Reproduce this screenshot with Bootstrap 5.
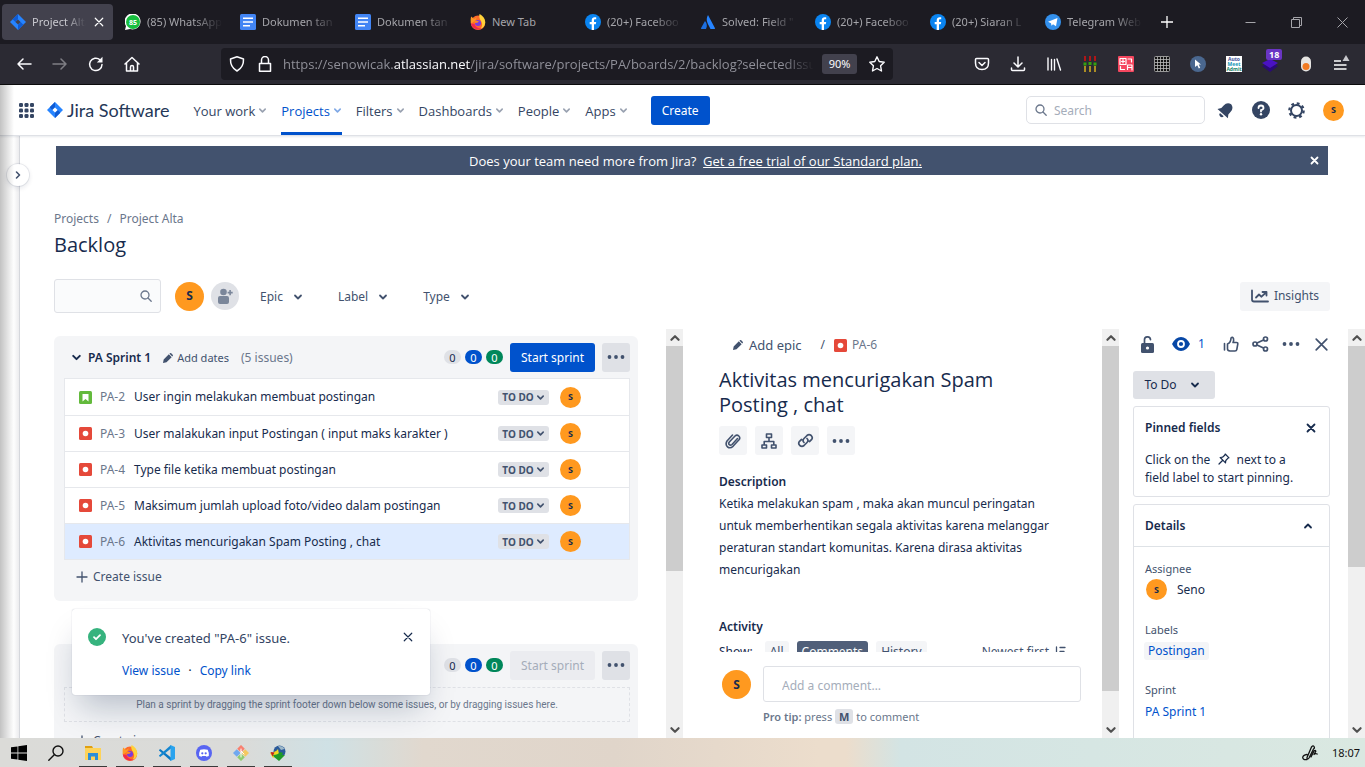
<!DOCTYPE html>
<html lang="en">
<head>
<meta charset="utf-8">
<meta name="viewport" content="width=device-width, initial-scale=1">
<title>Project Alta - Backlog - Jira</title>
<link href="https://cdn.jsdelivr.net/npm/bootstrap@5.3.0/dist/css/bootstrap.min.css" rel="stylesheet">
<style>
:root{--ink:#172b4d;--slate:#42526e;--mute:#6b778c;--line:#dfe1e6;--blue:#0052cc;--soft:#f4f5f7}
body{font-family:"Noto Sans","Open Sans",sans-serif;font-size:12px;line-height:16px;color:var(--ink);white-space:nowrap}
svg{display:block;flex:none}
a{text-decoration:none;color:inherit}
button,.btn{font-size:12px;line-height:16px}
button.plain{background:none;border:0;padding:0;color:inherit;display:flex;align-items:center;justify-content:center}
.stroke{fill:none;stroke:currentColor;stroke-linecap:round;stroke-linejoin:round}

/* browser window */
.tabstrip{height:44px;background:#1c1b22;color:#a5a5aa;padding-left:2px}
.tab{flex:0 1 115px;min-width:0;height:36px;padding:0 8px;font-size:11px;gap:6px;border-radius:4px}
.tab.current{background:#42414d;color:#c9c9cf;flex-basis:111px;margin-right:4px}
.fade-end{overflow:hidden;flex:1;-webkit-mask-image:linear-gradient(90deg,#000 60%,transparent 98%);mask-image:linear-gradient(90deg,#000 60%,transparent 98%)}
.winbtn{width:46px;height:44px}
.toolbar{height:41px;background:#2b2a33;color:#fbfbfe;border-bottom:1px solid #0c0c0d;padding:0 5px 0 6px}
.tool{width:36px;height:36px}
.tool:disabled{opacity:.4}
.address{height:32px;background:#1c1b22;border-radius:4px;margin:0 71px;min-width:0;flex:1;padding:0 8px;gap:12px}
.url{font:13px "Open Sans",sans-serif;color:#8f8f98;flex:1;overflow:hidden;margin:0 -4px 0 -2px;-webkit-mask-image:linear-gradient(90deg,#000 94%,transparent);mask-image:linear-gradient(90deg,#000 94%,transparent)}
.url b{font-weight:400;color:#fbfbfe}
.zoomed{background:#42414d!important;border-radius:3px;font-size:11px;width:35px;height:20px}
.ext-count{position:absolute;top:3px;left:14px;background:#6a35c4;color:#fff;font:700 9px/11px "Open Sans",sans-serif;padding:0 3px;border-radius:2px}

/* product header */
.product{height:51px;background:#fff;color:#344563;border-bottom:1px solid var(--line);box-shadow:0 1px 2px #091e4218;padding:0 21px 0 19px;z-index:2;position:relative}
.brand{font:18px "Lato",sans-serif;color:#253858;margin-left:13px;gap:4px}
.menu{gap:14px;font:13px "Open Sans",sans-serif;margin-left:24px}
.menu a{height:50px;display:flex;align-items:center;gap:3px;border-bottom:3px solid transparent;padding-top:4px}
.menu a svg{opacity:.5}
.menu a.active{color:var(--blue);border-color:var(--blue)}
.btn-jira{background:var(--blue);color:#fff;border:0;border-radius:3px;padding:1px 11px 0;height:29px}
.btn-jira:hover{background:#0065ff;color:#fff}
.btn-jira:disabled{background:#ebecf0;color:#a5adba;opacity:1}
.searchbox{width:179px;height:28px;border:1px solid var(--line);border-radius:5px;padding:0 8px;gap:7px;color:var(--mute);background:#fff}
.searchbox input{border:0;outline:0;width:100%;min-width:0;background:none;font-size:12px;padding:2px 0 0}
.searchbox input::placeholder,.comment::placeholder{color:#a5adba;opacity:1}
.ava{border-radius:50%;background:#ff991f;color:var(--ink);display:inline-flex;align-items:center;justify-content:center;flex:none;font-weight:700;width:21px;height:21px;font-size:9px}
.ava.big{width:29px;height:29px;font-size:12px}

/* page */
.stage{flex:1;min-height:0;position:relative;background:#fff}
.rail{width:20px;flex:none;border-right:1px solid #d5d7dc;background:linear-gradient(90deg,#fff 70%,#ececee);position:relative}
.rail button{position:absolute;top:28px;left:7px;width:22px;height:22px;border-radius:50%;box-shadow:0 0 0 1px #091e4214,0 2px 4px 1px #091e4214;color:var(--slate);z-index:3}
.edge{position:absolute;top:85px;bottom:29px;left:0;width:14px;background:linear-gradient(90deg,#0000003d,#0000);z-index:4;pointer-events:none}
.promo{background:#42526e;color:#fff;height:29px;margin:10px 37px 0 36px;padding:0 9px 0 25px;font:13px/16px "Open Sans",sans-serif}
.crumbs{color:var(--mute);margin:36px 0 0 34px;gap:8px}
h1,.detail h2{font-family:"Open Sans",sans-serif;font-size:20px;font-weight:400}
h1{line-height:24px;margin:6px 0 0 34px}
.filters{margin:22px 35px 0 34px;height:34px;color:var(--slate)}
.filters .find{width:107px;height:34px;border-radius:3px;background:#fafbfc}
.filters .pick{gap:10px;padding-top:2px}
.people{width:28px;height:28px;background:#dfe1e6!important;color:#7a869a!important;margin:0 21px 0 7px}
.soft{background:var(--soft)!important;border-radius:3px}
.panes{flex:1;min-height:0;margin-top:16px}
.pane-left{flex:663 1 0;min-width:0}
.pane-mid{flex:436 1 0;min-width:0}
.pane-right{flex:0 0 246px;min-width:0}
.clip{overflow:hidden;flex:1;min-width:0;min-height:0}
.bar{width:17px;background:#f0f0f0;color:#505050;flex:none}
.bar .thumb{background:#cdcdcd}
.bar button{height:17px;width:17px}
.sprint{background:var(--soft);border-radius:6px;margin:7px 28px 43px 34px;padding:0 8px 0 10px}
.sprint header{height:42px}
.sprint header .cap{padding-top:2px}
.sprint h2{font-size:12px;line-height:16px;font-weight:600;margin:0}
.num{width:17px;height:14px;line-height:15px;border-radius:7px;text-align:center;font-size:11px;background:var(--line);color:var(--ink)}
.num.b{background:var(--blue);color:#fff}.num.g{background:#00875a;color:#fff}
.sprint .btn-jira{margin:0 7px}
.dots{width:28px;height:29px;background:var(--line)!important;border-radius:3px;color:var(--slate)!important}
.issues{border:1px solid #e6e8ec;background:#fff;margin:0;padding:0;list-style:none}
.issues li{height:36px;padding:0 48px 0 14px;display:flex;align-items:center}
.issues li+li{border-top:1px solid #e6e8ec}
.issues li.on{background:#deebff}
.issues .key{width:34px;margin-left:8px;color:var(--mute)}
.status{background:var(--line)!important;border-radius:3px;width:51px;height:15px;font-size:10px;font-weight:700;color:var(--slate)!important;gap:2px;margin-right:11px}
.addissue{height:41px;color:var(--slate)!important;padding:0 0 8px 12px!important;gap:5px}
.drop{border:1px dashed var(--line);height:35px;margin:1px 0 2px;font:10px Roboto,sans-serif;color:var(--mute)}
.flag{position:absolute;left:72px;bottom:43px;width:358px;height:86px;background:#fff;border-radius:3px;box-shadow:0 0 1px #091e424f,0 20px 32px -8px #091e4240;padding:19px 16px 0;gap:16px;z-index:3;font-size:13px}
.flag a{font-size:12px;color:var(--blue)}

/* issue panel */
.detail{padding:7px 36px 0 36px}
.detail h2{line-height:25px;margin:13px 0 9px}
.detail h3,.rightcol h3{font-size:12px;line-height:16px;font-weight:600;margin:0}
.sq{width:28px;height:29px;background:var(--soft)!important;border-radius:3px;color:var(--slate)!important}
.detail p{line-height:22px;white-space:normal;margin:3px 0 0}
.trail{padding-left:14px;color:var(--slate);height:18px}
.showrow{gap:8px;margin-top:6px;color:var(--slate)}
.chip{background:var(--soft);border:0;color:var(--slate);border-radius:3px;height:22px;padding:0 5px}
.chip.sel{background:#505f79;color:#fff}
.composer{padding:14px 21px 0 39px;height:86px;gap:12px}
.comment{border:1px solid var(--line);border-radius:3px;height:36px;padding:2px 18px 0;width:100%;font-size:12px}
kbd.key-m{background:var(--line);color:var(--slate);font:700 11px/13px "Open Sans",sans-serif;padding:0 4px;border-radius:3px}
.rightcol{padding:0 18px 0 14px}
.rightcol .acts{height:30px;color:var(--slate);padding-left:8px;gap:13px}
.acts .watch{gap:8px;color:var(--blue)!important;margin:0 5px}
.state{width:82px;height:28px;background:var(--line)!important;border-radius:3px;margin-top:12px;gap:13px;padding-right:4px!important;color:var(--ink)!important}
.box{border:1px solid var(--line);border-radius:3px;margin-top:7px}
.lbl{font-size:11px;line-height:16px;color:var(--slate);display:block}

.taskbar{height:29px;color:#111;background:linear-gradient(90deg,#dbdbd8 0,#dadbd9 18%,#cfe1e5 24%,#e1d8ce 31%,#e0d5ca 45%,#ecddcc 60%,#ecddcc 62%,#d3e4e4 66%,#d6e6e3 80%,#dae8e1 100%)}
.task{width:37px;height:29px;position:relative}
.task.open::after{content:"";position:absolute;bottom:0;left:5px;right:4px;height:1px;background:#3a3a3a}
</style>
</head>
<body class="vh-100 overflow-hidden d-flex flex-column">

<svg width="0" height="0" class="position-absolute">
  <defs>
    <symbol id="i-x" viewBox="0 0 16 16"><path class="stroke" stroke-width="1.6" d="M3 3l10 10M13 3L3 13"/></symbol>
    <symbol id="i-down" viewBox="0 0 10 10"><path class="stroke" stroke-width="1.8" d="M2 3.500l3 3 3-3"/></symbol>
    <symbol id="i-up" viewBox="0 0 10 10"><path class="stroke" stroke-width="1.8" d="M2 6.500l3-3 3 3"/></symbol>
    <symbol id="i-dots" viewBox="0 0 18 6"><g fill="currentColor"><circle cx="2.500" cy="3" r="1.900"/><circle cx="9" cy="3" r="1.900"/><circle cx="15.500" cy="3" r="1.900"/></g></symbol>
    <symbol id="i-find" viewBox="0 0 12 12"><circle class="stroke" cx="5" cy="5" r="4" stroke-width="1.3"/><path class="stroke" stroke-width="1.3" d="M8 8l3.200 3.200"/></symbol>
    <symbol id="i-pen" viewBox="0 0 12 12"><path fill="currentColor" d="M0 12l.8-4.200L7 1.600 10.400 5 4.200 11.200zM7.800.900l.5-.5q.8-.7 1.600 0l1.700 1.700q.7.800 0 1.600l-.5.5z"/></symbol>
    <symbol id="i-bug" viewBox="0 0 13 13"><rect width="13" height="13" rx="1.500" fill="#e5493a"/><circle cx="6.500" cy="6.500" r="2.800" fill="#fff"/></symbol>
    <symbol id="i-story" viewBox="0 0 13 13"><rect width="13" height="13" rx="1.500" fill="#63ba3c"/><path fill="#fff" d="M3.500 3h6v7.500L6.500 8l-3 2.500z"/></symbol>
    <symbol id="i-jira" viewBox="0 0 16 16"><path fill="#2684ff" d="M8 0l8 8-8 8-8-8z"/><path fill="#0f5bd3" d="M8 0v5.300L5.300 8 2.700 5.300zM8 16v-5.300L10.700 8l2.600 2.700z"/><path fill="#fff" d="M8 5.400L10.600 8 8 10.600 5.400 8z"/></symbol>
    <symbol id="i-jiratab" viewBox="0 0 16 16"><path fill="#2684ff" d="M8 0l8 8-8 8-8-8z"/><path fill="#0f5bd3" d="M8 0v5.300L5.300 8 2.700 5.300zM8 16v-5.300L10.700 8l2.600 2.700z"/><path fill="#42414d" d="M8 5.400L10.600 8 8 10.600 5.400 8z"/></symbol>
    <symbol id="i-fb" viewBox="0 0 16 16"><circle cx="8" cy="8" r="8" fill="#0a84f0"/><path fill="#fff" d="M6.700 16V10.300H4.700V8h2V6.300C6.700 4.200 7.900 3.200 9.700 3.200l1.500.1v2h-1C9.200 5.300 9 5.800 9 6.500V8h2.200l-.4 2.300H9V16z"/></symbol>
    <symbol id="i-doc" viewBox="0 0 16 16"><rect width="16" height="16" rx="1.500" fill="#4285f4"/><path stroke="#fff" stroke-width="1.600" d="M3 4.300h10M3 8h10M3 11.700h7"/></symbol>
    <symbol id="i-ff" viewBox="0 0 16 16"><circle cx="8" cy="8.800" r="7.200" fill="#ff6a2b"/><path fill="#ffd23a" d="M9.500 0c3.800 2 6 5 5.700 9-.4 3.500-2.500 5.300-5 6 2-2 2.600-4.500 1.300-7C10.500 5.500 8.500 4 9.500 0z"/><path fill="#ff9a26" d="M1.200 2.500L4 5l3-1.800L5 7l-4 2.500C.5 7 .5 4.500 1.200 2.500z"/><path fill="#f2284f" d="M.8 9.500C2 15 8 17 12.500 14.300 9 15 5.500 13.500 4.500 10z"/><circle cx="8" cy="9" r="3" fill="#7a3be0"/><path fill="#ff8a20" d="M4.500 6.500l4.500 .8-1.500 1.500-3 .2z"/></symbol>
  </defs>
</svg>

<!-- Browser tabs -->
<div class="tabstrip d-flex align-items-center">
  <div class="tab current d-flex align-items-center"><svg width="16" height="16"><use href="#i-jiratab"/></svg><span class="fade-end">Project Alta</span><button class="plain" aria-label="Close tab"><svg width="12" height="12" color="#fff"><use href="#i-x"/></svg></button></div>
  <div class="tab d-flex align-items-center"><svg width="16" height="16" viewBox="0 0 16 16"><path fill="#fff" d="M0 16l1-4A8 8 0 1 1 5 15z"/><circle cx="8" cy="8" r="7" fill="#18bf3f"/><text x="8" y="10.500" text-anchor="middle" font-size="7" font-weight="700" fill="#fff">85</text></svg><span class="fade-end">(85) WhatsApp</span></div>
  <div class="tab d-flex align-items-center"><svg width="16" height="16"><use href="#i-doc"/></svg><span class="fade-end">Dokumen tan</span></div>
  <div class="tab d-flex align-items-center"><svg width="16" height="16"><use href="#i-doc"/></svg><span class="fade-end">Dokumen tan</span></div>
  <div class="tab d-flex align-items-center"><svg width="16" height="16"><use href="#i-ff"/></svg><span>New Tab</span></div>
  <div class="tab d-flex align-items-center"><svg width="16" height="16"><use href="#i-fb"/></svg><span class="fade-end">(20+) Faceboo</span></div>
  <div class="tab d-flex align-items-center"><svg width="16" height="16" viewBox="0 0 16 16"><path fill="#1d6fe0" d="M5 7c2 2 2.500 5 1 8H1.500q-.8-.2-.4-1z"/><path fill="#2684ff" d="M8 1q-2.500 4.500-.3 8.500L10.500 15H14.500q.8-.2.4-1z"/></svg><span class="fade-end">Solved: Field "</span></div>
  <div class="tab d-flex align-items-center"><svg width="16" height="16"><use href="#i-fb"/></svg><span class="fade-end">(20+) Faceboo</span></div>
  <div class="tab d-flex align-items-center"><svg width="16" height="16"><use href="#i-fb"/></svg><span class="fade-end">(20+) Siaran L</span></div>
  <div class="tab d-flex align-items-center"><svg width="16" height="16" viewBox="0 0 16 16"><circle cx="8" cy="8" r="8" fill="#3390ec"/><path fill="#fff" d="M3 7.800L12.500 4 11 12.300 8 10.200 6.500 11.700 6 9.300z"/></svg><span class="fade-end">Telegram Web</span></div>
  <button class="plain" style="width:30px" aria-label="New tab"><svg width="12" height="12" viewBox="0 0 12 12"><path stroke="#fff" stroke-width="1.300" d="M6 0v12M0 6h12"/></svg></button>
  <div class="d-flex ms-auto">
    <button class="plain winbtn" aria-label="Minimize"><svg width="11" height="11" viewBox="0 0 11 11"><path stroke="currentColor" d="M.5 5.500h10"/></svg></button>
    <button class="plain winbtn" aria-label="Restore"><svg width="11" height="11" viewBox="0 0 11 11"><path fill="none" stroke="currentColor" d="M.5 2.500h8v8h-8zM2.500 2.500v-2h8v8h-2"/></svg></button>
    <button class="plain winbtn" aria-label="Close window"><svg width="11" height="11" viewBox="0 0 11 11"><path stroke="currentColor" d="M.5.500l10 10M10.500.500l-10 10"/></svg></button>
  </div>
</div>

<!-- Browser toolbar -->
<div class="toolbar d-flex align-items-center">
  <button class="plain tool" aria-label="Back"><svg width="16" height="16" viewBox="0 0 16 16"><path class="stroke" stroke-width="1.500" d="M15 8H2M7 3L2 8l5 5"/></svg></button>
  <button class="plain tool" aria-label="Forward" disabled><svg width="16" height="16" viewBox="0 0 16 16"><path class="stroke" stroke-width="1.500" d="M1 8h13M9 3l5 5-5 5"/></svg></button>
  <button class="plain tool" aria-label="Reload"><svg width="16" height="16" viewBox="0 0 16 16"><path class="stroke" stroke-width="1.500" d="M14 8.500A6.200 6.200 0 1 1 12 3.800"/><path fill="currentColor" d="M14.500.800v5.700H8.800z"/></svg></button>
  <button class="plain tool" aria-label="Home"><svg width="16" height="16" viewBox="0 0 16 16"><path class="stroke" stroke-width="1.500" d="M1 8l7-6.500L15 8M2.500 7v8h11V7M6.500 15v-4q0-1.500 1.500-1.500T9.500 11v4"/></svg></button>
  <div class="address d-flex align-items-center">
    <svg width="16" height="16" viewBox="0 0 16 16"><path class="stroke" stroke-width="1.500" d="M8 .8L14.500 3q.4 8-6.500 12Q1.100 11 1.500 3z"/></svg>
    <svg width="16" height="16" viewBox="0 0 16 16"><path class="stroke" stroke-width="1.500" d="M2.500 7.500h11v7.700h-11zM4.500 7.500V4a3.500 3.500 0 0 1 7 0v3.500"/></svg>
    <span class="url">https://senowicak.<b>atlassian.net</b>/jira/software/projects/PA/boards/2/backlog?selectedIssu</span>
    <button class="plain zoomed">90%</button>
    <svg width="16" height="16" viewBox="0 0 16 16"><path class="stroke" stroke-width="1.400" d="M8 .8l2.200 4.700 5 .7-3.600 3.600.9 5.200L8 12.500 3.500 15l.9-5.200L.8 6.200l5-.7z"/></svg>
  </div>
  <button class="plain tool" aria-label="Pocket"><svg width="16" height="16" viewBox="0 0 16 16"><path class="stroke" stroke-width="1.500" d="M2.500 2.500h11q1 0 1 1V7q0 6.500-6.500 6.500T1.500 7V3.500q0-1 1-1zM5 6.500l3 3 3-3"/></svg></button>
  <button class="plain tool" aria-label="Downloads"><svg width="16" height="16" viewBox="0 0 16 16"><path class="stroke" stroke-width="1.500" d="M8 1v9.500M4 7l4 4 4-4M1.500 12v1.500q0 1 1 1h11q1 0 1-1V12"/></svg></button>
  <button class="plain tool" aria-label="Library"><svg width="16" height="16" viewBox="0 0 16 16"><path class="stroke" stroke-width="1.400" d="M2 2v12M5.500 3.500V14M8.500 3.500V14M11 3l3.500 11"/></svg></button>
  <button class="plain tool" aria-label="Levels"><svg width="16" height="16" viewBox="0 0 16 16"><path stroke="#d11" stroke-width="1.500" d="M3 0v5M8 0v5M13 0v5"/><path stroke="#d8b020" stroke-width="1.500" d="M3 10v6M8 10v6M13 10v6"/><path fill="#35a010" d="M1.500 6.500h3v3h-3zM6.500 6h3v3h-3zM11.500 6.500h3v3h-3z"/></svg></button>
  <button class="plain tool" aria-label="Translate"><svg width="16" height="16" viewBox="0 0 16 16"><rect width="16" height="16" rx="1" fill="#f5475f"/><path class="stroke" style="stroke:#fff" stroke-width="1.200" d="M2 2.500h6v6H2zM3.500 5.500h3M5 3.500v3.500M10 3h3.500v3M2.500 10.500v3h4M9.500 13.500V9h4.500v5M9.500 11.500H14"/></svg></button>
  <button class="plain tool" aria-label="Grid"><svg width="16" height="16" viewBox="0 0 16 16"><rect x=".5" y=".5" width="15" height="15" rx="1" fill="#111" stroke="#999"/><path stroke="#bbb" stroke-width=".8" d="M3.500 1v14M6.500 1v14M9.500 1v14M12.500 1v14M1 3.500h14M1 6.500h14M1 9.500h14M1 12.500h14"/></svg></button>
  <button class="plain tool" aria-label="Pointer"><svg width="16" height="16" viewBox="0 0 16 16"><circle cx="8" cy="8" r="8" fill="#4a678f"/><path fill="#fff" d="M5 3.500l6 5H8.700l1.500 3.300-1.400.6L7.300 9.300 5 11z"/></svg></button>
  <button class="plain tool" aria-label="Auto Meet Admit"><svg width="16" height="16" viewBox="0 0 16 16"><rect width="16" height="16" fill="#fff"/><g font-size="5" font-weight="700" text-anchor="middle"><text x="8" y="5" fill="#41519a">Auto</text><text x="8" y="10" fill="#1596b5">Meet</text><text x="8" y="15" fill="#17836a">Admit</text></g></svg></button>
  <button class="plain tool position-relative" aria-label="Layers"><svg width="18" height="16" viewBox="0 0 18 16"><path fill="#2a0a78" d="M1 10l8-4 8 4-8 6z"/><path fill="#4a12c4" d="M1 7l8-4 8 4-8 5z"/></svg><span class="ext-count">18</span></button>
  <button class="plain tool" aria-label="Toggle"><svg width="12" height="16" viewBox="0 0 12 16"><rect x="1" y=".500" width="10" height="15" rx="5" fill="#e6e4e2"/><circle cx="6" cy="10.500" r="3.500" fill="#f27a22"/></svg></button>
  <button class="plain tool" aria-label="Menu"><svg width="16" height="18" viewBox="0 0 16 18"><path stroke="#fff" stroke-width="1.400" d="M0 6h7M0 10h12.500M0 14h12.500"/><path fill="#c8c8cc" d="M8.500 6L12 0l3.500 6z"/></svg></button>
</div>

<!-- Product header -->
<nav class="product d-flex align-items-center" aria-label="Product">
  <button class="plain" aria-label="Switch to"><svg width="15" height="15" viewBox="0 0 15 15" fill="currentColor"><g id="r3"><rect width="4" height="4" rx="1.300"/><rect x="5.500" width="4" height="4" rx="1.300"/><rect x="11" width="4" height="4" rx="1.300"/></g><use href="#r3" y="5.500"/><use href="#r3" y="11"/></svg></button>
  <a href="#" class="brand d-flex align-items-center"><svg width="16" height="16"><use href="#i-jira"/></svg>Jira Software</a>
  <div class="menu d-flex">
    <a href="#">Your work<svg width="9" height="9"><use href="#i-down"/></svg></a>
    <a href="#" class="active">Projects<svg width="9" height="9"><use href="#i-down"/></svg></a>
    <a href="#">Filters<svg width="9" height="9"><use href="#i-down"/></svg></a>
    <a href="#">Dashboards<svg width="9" height="9"><use href="#i-down"/></svg></a>
    <a href="#">People<svg width="9" height="9"><use href="#i-down"/></svg></a>
    <a href="#">Apps<svg width="9" height="9"><use href="#i-down"/></svg></a>
  </div>
  <button class="btn btn-jira" style="margin-left:23px">Create</button>
  <label class="searchbox d-flex align-items-center ms-auto"><svg width="12" height="12"><use href="#i-find"/></svg><input type="search" placeholder="Search" aria-label="Search"></label>
  <div class="d-flex align-items-center" style="margin-left:12px;gap:18px">
    <button class="plain" aria-label="Notifications"><svg width="17" height="17" viewBox="0 0 17 17"><g fill="currentColor" transform="rotate(42 8.500 8.500)"><path d="M8.500 0q4.700 1 4.700 6v3.500l2.300 3.200H1.500l2.300-3.200V6q0-5 4.700-6z"/><path d="M6 14h5a2.500 2.500 0 0 1-5 0z"/></g></svg></button>
    <button class="plain" aria-label="Help"><svg width="18" height="18" viewBox="0 0 18 18"><circle cx="9" cy="9" r="9" fill="currentColor"/><path fill="none" stroke="#fff" stroke-width="1.800" stroke-linecap="round" d="M6.500 7q0-2.500 2.500-2.500T11.500 7Q11.500 8.500 9 9.200v1.300"/><circle cx="9" cy="13.300" r="1.200" fill="#fff"/></svg></button>
    <button class="plain" aria-label="Settings"><svg width="17" height="17" viewBox="0 0 17 17"><circle cx="8.500" cy="8.500" r="5.500" fill="none" stroke="currentColor" stroke-width="2"/><circle cx="8.500" cy="8.500" r="7.200" fill="none" stroke="currentColor" stroke-width="2.200" stroke-dasharray="2.830 2.830"/></svg></button>
    <span class="ava">S</span>
  </div>
</nav>

<div class="stage d-flex">
  <aside class="rail"><button class="plain" style="background:#fff" aria-label="Expand sidebar"><svg width="10" height="10" viewBox="0 0 10 10"><path class="stroke" stroke-width="1.600" d="M3.500 2l3 3-3 3"/></svg></button></aside>

  <main class="d-flex flex-column flex-grow-1" style="min-width:0">
    <div class="promo d-flex align-items-center">
      <div class="flex-grow-1 text-center">Does your team need more from Jira? &nbsp;<a href="#" class="text-decoration-underline">Get a free trial of our Standard plan.</a></div>
      <button class="plain" aria-label="Dismiss"><svg width="9" height="9" viewBox="0 0 9 9"><path class="stroke" stroke-width="1.800" d="M1.500 1.500l6 6M7.500 1.500l-6 6"/></svg></button>
    </div>
    <div class="crumbs d-flex"><a href="#">Projects</a><span>/</span><a href="#">Project Alta</a></div>
    <h1>Backlog</h1>

    <div class="filters d-flex align-items-center">
      <label class="searchbox find d-flex align-items-center"><input type="search" aria-label="Search backlog"><svg width="12" height="12"><use href="#i-find"/></svg></label>
      <span class="ava big" style="margin-left:14px">S</span>
      <button class="plain rounded-circle people" aria-label="Add people"><svg width="16" height="16" viewBox="0 0 16 16" fill="currentColor"><circle cx="6.500" cy="4" r="3.300"/><path d="M1 10q0-2 2-2h7q2 0 2 2v4q0 2-2 2H3q-2 0-2-2zM12.300 2h1.600v1.800h1.800v1.600h-1.800v1.800h-1.600V5.400h-1.700V3.800h1.700z"/></svg></button>
      <div class="d-flex" style="gap:35px">
        <button class="plain pick">Epic<svg width="10" height="10"><use href="#i-down"/></svg></button>
        <button class="plain pick">Label<svg width="10" height="10"><use href="#i-down"/></svg></button>
        <button class="plain pick">Type<svg width="10" height="10"><use href="#i-down"/></svg></button>
      </div>
      <button class="plain soft ms-auto" style="height:29px;width:90px;gap:5px"><svg width="18" height="14" viewBox="0 0 18 14"><path class="stroke" stroke-width="1.800" d="M1 1.500v9q0 2 2 2h14"/><path class="stroke" stroke-width="1.800" d="M5 8.500l3-3 2.500 2.200L15 3.500M11.500 3H15.500v3.500"/></svg>Insights</button>
    </div>

    <div class="panes d-flex">
      <!-- Sprint list -->
      <div class="pane-left d-flex">
        <div class="clip">
          <section class="sprint">
            <header class="d-flex align-items-center">
              <button class="plain" style="margin:0 6px 0 7px" aria-label="Collapse sprint"><svg width="11" height="11"><use href="#i-down"/></svg></button>
              <div class="cap d-flex align-items-center" style="gap:12px">
                <h2>PA Sprint 1</h2>
                <button class="plain" style="gap:4px;font-size:11px;color:#42526e"><svg width="10" height="10"><use href="#i-pen"/></svg>Add dates</button>
                <span style="color:#6b778c">(5 issues)</span>
              </div>
              <div class="d-flex ms-auto gap-1"><span class="num">0</span><span class="num b">0</span><span class="num g">0</span></div>
              <button class="btn btn-jira">Start sprint</button>
              <button class="plain dots" aria-label="Sprint actions"><svg width="18" height="6"><use href="#i-dots"/></svg></button>
            </header>
            <ul class="issues">
              <li><svg width="13" height="13"><use href="#i-story"/></svg><a href="#" class="key">PA-2</a><span class="flex-grow-1">User ingin melakukan membuat postingan</span><button class="plain status">TO DO<svg width="9" height="9"><use href="#i-down"/></svg></button><span class="ava">S</span></li>
              <li><svg width="13" height="13"><use href="#i-bug"/></svg><a href="#" class="key">PA-3</a><span class="flex-grow-1">User malakukan input Postingan ( input maks karakter )</span><button class="plain status">TO DO<svg width="9" height="9"><use href="#i-down"/></svg></button><span class="ava">S</span></li>
              <li><svg width="13" height="13"><use href="#i-bug"/></svg><a href="#" class="key">PA-4</a><span class="flex-grow-1">Type file ketika membuat postingan</span><button class="plain status">TO DO<svg width="9" height="9"><use href="#i-down"/></svg></button><span class="ava">S</span></li>
              <li><svg width="13" height="13"><use href="#i-bug"/></svg><a href="#" class="key">PA-5</a><span class="flex-grow-1">Maksimum jumlah upload foto/video dalam postingan</span><button class="plain status">TO DO<svg width="9" height="9"><use href="#i-down"/></svg></button><span class="ava">S</span></li>
              <li class="on"><svg width="13" height="13"><use href="#i-bug"/></svg><a href="#" class="key">PA-6</a><span class="flex-grow-1">Aktivitas mencurigakan Spam Posting , chat</span><button class="plain status">TO DO<svg width="9" height="9"><use href="#i-down"/></svg></button><span class="ava">S</span></li>
            </ul>
            <button class="plain addissue"><svg width="12" height="12" viewBox="0 0 12 12"><path class="stroke" stroke-width="1.300" d="M6 1v10M1 6h10"/></svg>Create issue</button>
          </section>
          <section class="sprint">
            <header class="d-flex align-items-center">
              <div class="d-flex ms-auto gap-1"><span class="num">0</span><span class="num b">0</span><span class="num g">0</span></div>
              <button class="btn btn-jira" disabled>Start sprint</button>
              <button class="plain dots" aria-label="Sprint actions"><svg width="18" height="6"><use href="#i-dots"/></svg></button>
            </header>
            <div class="drop d-flex align-items-center justify-content-center">Plan a sprint by dragging the sprint footer down below some issues, or by dragging issues here.</div>
            <button class="plain addissue"><svg width="12" height="12" viewBox="0 0 12 12"><path class="stroke" stroke-width="1.300" d="M6 1v10M1 6h10"/></svg>Create issue</button>
          </section>
        </div>
        <div class="bar d-flex flex-column">
          <button class="plain" aria-label="Scroll up"><svg width="12" height="12"><use href="#i-up"/></svg></button>
          <div class="flex-grow-1"><div class="thumb" style="height:60%"></div></div>
          <button class="plain" aria-label="Scroll down"><svg width="12" height="12"><use href="#i-down"/></svg></button>
        </div>
      </div>

      <!-- Issue -->
      <div class="pane-mid d-flex">
        <div class="d-flex flex-column flex-grow-1" style="min-width:0">
          <div class="clip">
            <div class="detail">
              <div class="trail d-flex align-items-center"><button class="plain" style="gap:6px;font-size:13px"><svg width="10" height="10"><use href="#i-pen"/></svg>Add epic</button><span style="margin:0 9px 0 19px">/</span><svg width="13" height="13"><use href="#i-bug"/></svg><a href="#" style="margin-left:5px;color:#6b778c">PA-6</a></div>
              <h2>Aktivitas mencurigakan Spam<br>Posting , chat</h2>
              <div class="d-flex gap-2">
                <button class="plain sq" aria-label="Attach"><svg width="16" height="18" viewBox="0 0 16 18"><path class="stroke" stroke-width="1.600" d="M12.500 6.500l-5.500 6q-1.500 1.300-2.700.2t0-2.700L10 4q2-1.700 3.800 0t.2 3.800l-6 6.500Q5 17 2.500 14.800T2 9l5.500-6"/></svg></button>
                <button class="plain sq" aria-label="Add child issue"><svg width="16" height="16" viewBox="0 0 16 16"><path class="stroke" stroke-width="1.600" d="M5.500 1h5v3.500h-5zM1 12h4.500v3H1zM10.500 12H15v3h-4.500zM8 4.500v4M3.200 12V8.500h9.600V12"/></svg></button>
                <button class="plain sq" aria-label="Link issue"><svg width="17" height="17" viewBox="0 0 17 17"><path class="stroke" stroke-width="1.700" d="M7 10.500q-2-2 0-4l3-3q2-1.700 4.200 0 2 2.200.3 4.200L12.500 9.500M10 6.500q2 2 0 4l-3 3q-2 1.700-4.200 0-2-2.200-.3-4.200L4.500 7.500"/></svg></button>
                <button class="plain sq" aria-label="More"><svg width="18" height="6"><use href="#i-dots"/></svg></button>
              </div>
              <h3 style="margin-top:19px">Description</h3>
              <p>Ketika melakukan spam , maka akan muncul peringatan untuk memberhentikan segala aktivitas karena melanggar peraturan standart komunitas. Karena dirasa aktivitas mencurigakan</p>
              <h3 style="margin-top:38px">Activity</h3>
              <div class="showrow d-flex align-items-center"><span class="me-1" style="color:#172b4d">Show:</span><button class="chip">All</button><button class="chip sel">Comments</button><button class="chip">History</button><button class="plain ms-auto" style="gap:5px">Newest first<svg width="12" height="12" viewBox="0 0 12 12"><path class="stroke" stroke-width="1.300" d="M2.500 1v9M1 8.500l1.500 1.500L4 8.500M6 1.500h5M6 5.500h4M6 9.500h2"/></svg></button></div>
            </div>
          </div>
          <div class="composer d-flex">
            <span class="ava big" style="margin-top:4px">S</span>
            <div class="flex-grow-1"><input class="comment" type="text" placeholder="Add a comment…" aria-label="Add a comment">
              <div style="margin-top:7px;font-size:11px;color:#6b778c"><b style="font-weight:600">Pro tip:</b> press <kbd class="key-m">M</kbd> to comment</div></div>
          </div>
        </div>
        <div class="bar d-flex flex-column">
          <button class="plain" aria-label="Scroll up"><svg width="12" height="12"><use href="#i-up"/></svg></button>
          <div class="flex-grow-1"><div class="thumb" style="height:92%"></div></div>
          <button class="plain" aria-label="Scroll down"><svg width="12" height="12"><use href="#i-down"/></svg></button>
        </div>
      </div>

      <!-- Fields -->
      <div class="pane-right d-flex">
        <div class="clip rightcol">
          <div class="acts d-flex align-items-center">
            <button class="plain" aria-label="Restrictions"><svg width="13" height="17" viewBox="0 0 13 17"><rect y="7" width="13" height="10" rx="1.500" fill="currentColor"/><path class="stroke" stroke-width="1.700" d="M3.500 7V4.200a3 3 0 0 1 6-.5"/><circle cx="6.500" cy="12" r="1.600" fill="#fff"/></svg></button>
            <button class="plain watch" aria-label="Watch"><svg width="18" height="14" viewBox="0 0 18 14"><path fill="#0747a6" d="M0 7Q3.500 0 9 0t9 7q-3.500 7-9 7T0 7z"/><circle cx="9" cy="7" r="3" fill="none" stroke="#fff" stroke-width="1.800"/></svg>1</button>
            <button class="plain" aria-label="Vote"><svg width="16" height="16" viewBox="0 0 16 16"><path class="stroke" stroke-width="1.600" d="M1.500 7.500V14M4.500 8q3.500-1.500 3.500-6 1.500-1.500 2.500.5.500 2-.5 4h3.500q1.500 0 1.300 1.500l-1 5.500q-.3 1.500-1.800 1.500H7q-2.500-.3-2.500-2z"/></svg></button>
            <button class="plain" aria-label="Share"><svg width="17" height="16" viewBox="0 0 17 16"><g class="stroke" stroke-width="1.700"><circle cx="3" cy="8" r="2"/><circle cx="13.500" cy="3" r="2"/><circle cx="13.500" cy="13" r="2"/><path d="M5 7l6.500-3M5 9l6.500 3"/></g></svg></button>
            <button class="plain" aria-label="Actions"><svg width="18" height="6"><use href="#i-dots"/></svg></button>
            <button class="plain" aria-label="Close"><svg width="17" height="17"><use href="#i-x"/></svg></button>
          </div>
          <button class="plain state">To Do<svg width="10" height="10"><use href="#i-down"/></svg></button>
          <div class="box" style="padding:13px 12px 9px 11px">
            <div class="d-flex justify-content-between align-items-center"><h3>Pinned fields</h3><button class="plain" aria-label="Dismiss"><svg width="12" height="12" viewBox="0 0 12 12"><path class="stroke" stroke-width="1.800" d="M2.500 2.500l7 7M9.500 2.500l-7 7"/></svg></button></div>
            <div style="margin-top:15px;line-height:18px">Click on the <svg class="d-inline-block mx-1" style="vertical-align:-1px" width="12" height="12" viewBox="0 0 12 12"><path class="stroke" stroke-width="1.200" d="M7.200 1l3.800 3.800-1.200.5L7.800 7.500l-.3 2.300L2.200 4.500 4.500 4.200 6.700 2.200zM4.500 7.500L1 11"/></svg> next to a<br>field label to start pinning.</div>
          </div>
          <div class="box">
            <div class="d-flex justify-content-between align-items-center border-bottom" style="height:42px;padding:1px 16px 0 11px"><h3>Details</h3><button class="plain" aria-label="Collapse details"><svg width="10" height="10"><use href="#i-up"/></svg></button></div>
            <div style="padding:14px 0 40px 11px">
              <span class="lbl">Assignee</span>
              <div class="d-flex align-items-center" style="padding:2px 0 0 1px;gap:10px"><span class="ava">S</span>Seno</div>
              <span class="lbl" style="margin-top:22px">Labels</span>
              <a href="#" class="d-inline-block soft" style="color:#0052cc;margin:4px 0 22px -1px;padding:1px 4px">Postingan</a>
              <span class="lbl">Sprint</span>
              <a href="#" class="d-inline-block" style="color:#0052cc;margin-top:6px">PA Sprint 1</a>
            </div>
          </div>
        </div>
        <div class="bar d-flex flex-column">
          <button class="plain" aria-label="Scroll up"><svg width="12" height="12"><use href="#i-up"/></svg></button>
          <div class="flex-grow-1"><div class="thumb" style="height:59%"></div></div>
          <button class="plain" aria-label="Scroll down"><svg width="12" height="12"><use href="#i-down"/></svg></button>
        </div>
      </div>
    </div>
  </main>

  <!-- Confirmation flag -->
  <div class="flag d-flex" role="status">
    <svg width="18" height="18" viewBox="0 0 18 18"><circle cx="9" cy="9" r="9" fill="#36b37e"/><path fill="none" stroke="#fff" stroke-width="1.800" stroke-linecap="round" stroke-linejoin="round" d="M6 9.200l2 2 4-4"/></svg>
    <div class="flex-grow-1"><div style="color:#344563;margin-top:1px;line-height:18px">You've created "PA-6" issue.</div><div style="margin-top:15px"><a href="#">View issue</a><span class="mx-2">·</span><a href="#">Copy link</a></div></div>
    <button class="plain align-self-start" style="margin-top:3px" aria-label="Dismiss"><svg width="12" height="12"><use href="#i-x"/></svg></button>
  </div>
</div>
<div class="edge"></div>

<!-- Desktop taskbar -->
<footer class="taskbar d-flex align-items-center">
  <button class="plain task" aria-label="Start"><svg width="16" height="16" viewBox="0 0 16 16"><path d="M0 2.300L6.500 1.400V7.600H0zM7.300 1.300L16 0v7.600H7.300zM0 8.400h6.500v6.200L0 13.700zM7.300 8.400H16V16l-8.700-1.300z"/></svg></button>
  <button class="plain task" aria-label="Search"><svg width="16" height="16" viewBox="0 0 16 16"><circle class="stroke" cx="10" cy="6" r="5" stroke-width="1.400"/><path class="stroke" stroke-width="1.400" d="M6.500 9.500L.8 15.300"/></svg></button>
  <button class="plain task open" aria-label="Files"><svg width="16" height="16" viewBox="0 0 16 16"><path fill="#e0a010" d="M0 1h7l1 2H0z"/><path fill="#fdd35a" d="M0 3h16v12H0z"/><path fill="#2b8fd9" d="M3 8h10v7h-3v-3.500H6V15H3z"/></svg></button>
  <button class="plain task open" aria-label="Firefox"><svg width="16" height="16"><use href="#i-ff"/></svg></button>
  <button class="plain task open" aria-label="Code"><svg width="16" height="16" viewBox="0 0 16 16"><path fill="#0b78c4" d="M0 5l1.200-1L12 12.500V16L0 5.500z"/><path fill="#1486d0" d="M0 11l1.200 1L12 3.500V0L0 10.500z"/><path fill="#2aa3ee" d="M11.500 0L16 2v12l-4.500 2z"/></svg></button>
  <button class="plain task open" aria-label="Discord"><svg width="16" height="16" viewBox="0 0 16 16"><circle cx="8" cy="8" r="8" fill="#5865f2"/><path fill="#fff" d="M4.300 4.800Q8 3.700 11.700 4.800 13.300 8 12.800 11L10.500 11.800 9.800 11H6.200l-.7.8L3.200 11Q2.700 8 4.300 4.800z"/><circle cx="6.300" cy="8.300" r="1.100" fill="#5865f2"/><circle cx="9.700" cy="8.300" r="1.100" fill="#5865f2"/></svg></button>
  <button class="plain task open" aria-label="Git"><svg width="16" height="16" viewBox="0 0 16 16"><g transform="rotate(45 8 8)"><rect x="2.300" y="2.300" width="5.400" height="5.400" fill="#f88070"/><rect x="8.300" y="2.300" width="5.400" height="5.400" fill="#f5c860"/><rect x="2.300" y="8.300" width="5.400" height="5.400" fill="#70a8f0"/><rect x="8.300" y="8.300" width="5.400" height="5.400" fill="#90cc70"/></g><path class="stroke" style="stroke:#fff" d="M8 4v8M8 6l3 3"/></svg></button>
  <button class="plain task open" aria-label="Download manager"><svg width="16" height="16" viewBox="0 0 16 16"><circle cx="9.500" cy="6.500" r="6" fill="#2a5a9a"/><path fill="#9db8c8" d="M8 1q5-.5 6.500 3L11 5z"/><path fill="#f0d820" d="M0 8q6-1 8-4l1 5-6 4z"/><path fill="#c02020" d="M.5 7l4 .5-2 4z"/><path fill="#1f9a28" d="M3 10q5 0 7-3l3 1-1 2h3L9 16l-5-4z"/></svg></button>
  <div class="ms-auto d-flex align-items-center" style="gap:14px;padding-right:5px"><svg width="16" height="16" viewBox="0 0 16 16"><path class="stroke" stroke-width="1.300" d="M5 12.500L9.500 2Q11 0 12 1.500T11.500 4L7 13q-1 1.500-2 .500zM5 9.500q-4 .5-4.300 3 .3 2.800 4.300 2M9 12l3-6q1.500-1.500 1.800.200L12 9.500q1-1.500 3.200-.5"/></svg><span style="font-size:11px">18:07</span></div>
</footer>

<script src="https://cdn.jsdelivr.net/npm/bootstrap@5.3.0/dist/js/bootstrap.bundle.min.js"></script>
</body>
</html>
